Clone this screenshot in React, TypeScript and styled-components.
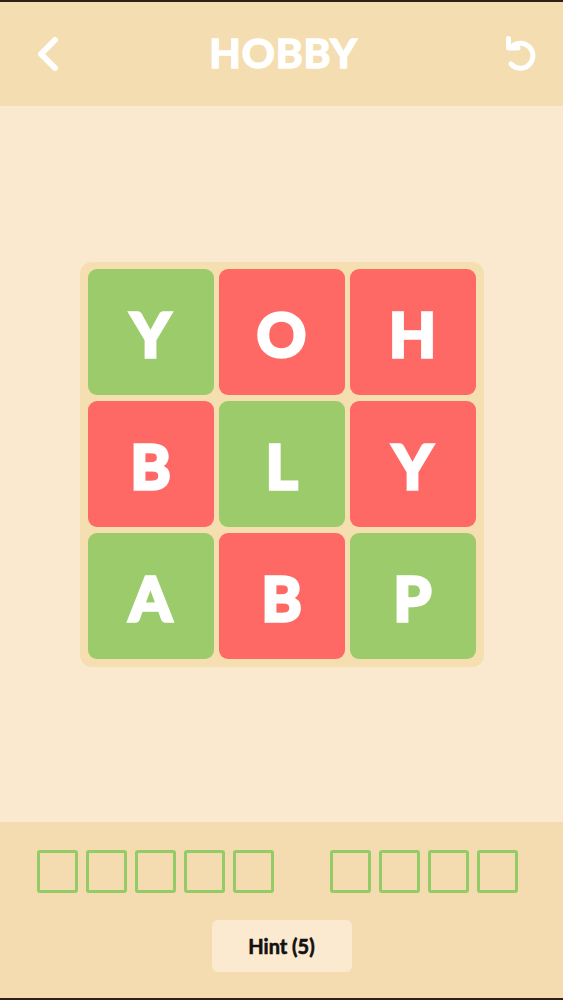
import React from "react";
import styled, { createGlobalStyle } from "styled-components";

const Global = createGlobalStyle`
  html, body { margin: 0; padding: 0; background: #2e2019; }
  #root { width: 563px; }
  * { box-sizing: border-box; }
`;

const Screen = styled.div`
  width: 563px;
  height: 1000px;
  display: flex;
  flex-direction: column;
  border-top: 2px solid #2e2019;
  border-bottom: 2px solid #2e2019;
  font-family: Lato, "Open Sans", sans-serif;
`;

const Header = styled.header`
  height: 104px;
  flex: none;
  background: #f4ddb0;
  display: flex;
  align-items: center;
  justify-content: space-between;
  padding: 0 26px 0 30px;
`;

const IconButton = styled.button`
  background: none;
  border: none;
  padding: 0;
  display: flex;
  align-items: center;
  justify-content: center;
  width: 34px;
  height: 40px;
  cursor: pointer;
`;

const Title = styled.h1`
  margin: 0 0 4px 0;
  color: #ffffff;
  font-family: Lato, sans-serif;
  font-weight: 700;
  font-size: 41px;
  letter-spacing: 0.8px;
  line-height: 1;
  -webkit-text-stroke: 1.6px #ffffff;
`;

const Main = styled.main`
  flex: 1;
  background: #fbe9cf;
  display: flex;
  align-items: center;
  justify-content: center;
`;

const Board = styled.div`
  background: #f5deb0;
  border-radius: 12px;
  padding: 7px 8px 8px 8px;
  display: grid;
  grid-template-columns: repeat(3, 126px);
  grid-auto-rows: 126px;
  gap: 6px 5px;
`;

const Tile = styled.div<{ $ok: boolean }>`
  background: ${(p) => (p.$ok ? "#9bcb6a" : "#fe6966")};
  border-radius: 9px;
  display: flex;
  align-items: center;
  justify-content: center;
  color: #ffffff;
  font-family: Lato, sans-serif;
  font-weight: 700;
  font-size: 61px;
  line-height: 1;
  padding-top: 4px;
  -webkit-text-stroke: 3.5px #ffffff;
`;

const Footer = styled.footer`
  height: 176px;
  flex: none;
  background: #f4dcb0;
  display: flex;
  flex-direction: column;
  align-items: center;
  padding-top: 28px;
  gap: 27px;
`;

const Answer = styled.div`
  display: flex;
  gap: 56px;
  margin-left: -8px;
`;

const Word = styled.div`
  display: flex;
  gap: 8px;
`;

const Slot = styled.div`
  width: 41px;
  height: 43px;
  border: 3px solid #93cb66;
  border-radius: 3px;
`;

const HintButton = styled.button`
  width: 140px;
  height: 52px;
  background: #fcead0;
  border: none;
  border-radius: 6px;
  font-family: Lato, sans-serif;
  font-weight: 700;
  font-size: 20px;
  color: #111111;
  -webkit-text-stroke: 0.6px #111111;
  cursor: pointer;
`;

const tiles: { l: string; ok: boolean }[] = [
  { l: "Y", ok: true },
  { l: "O", ok: false },
  { l: "H", ok: false },
  { l: "B", ok: false },
  { l: "L", ok: true },
  { l: "Y", ok: false },
  { l: "A", ok: true },
  { l: "B", ok: false },
  { l: "P", ok: true },
];

export default function App() {
  return (
    <>
      <Global />
      <Screen>
        <Header>
          <IconButton aria-label="back">
            <svg width="28" height="40" viewBox="0 0 28 40">
              <polyline
                points="22,6 8,20 22,34"
                fill="none"
                stroke="#fff"
                strokeWidth="6"
                strokeLinecap="round"
                strokeLinejoin="round"
              />
            </svg>
          </IconButton>
          <Title>HOBBY</Title>
          <IconButton aria-label="undo">
            <svg width="34" height="38" viewBox="0 0 34 38">
              <path
                d="M9 11.5 A12.5 12.5 0 1 1 8 29"
                fill="none"
                stroke="#fff"
                strokeWidth="5"
                strokeLinecap="round"
              />
              <path
                d="M5.5 3.5 V13 H15"
                fill="none"
                stroke="#fff"
                strokeWidth="5"
                strokeLinecap="round"
                strokeLinejoin="round"
              />
            </svg>
          </IconButton>
        </Header>
        <Main>
          <Board>
            {tiles.map((t, i) => (
              <Tile key={i} $ok={t.ok}>
                {t.l}
              </Tile>
            ))}
          </Board>
        </Main>
        <Footer>
          <Answer>
            <Word>
              {[0, 1, 2, 3, 4].map((i) => (
                <Slot key={i} />
              ))}
            </Word>
            <Word>
              {[0, 1, 2, 3].map((i) => (
                <Slot key={i} />
              ))}
            </Word>
          </Answer>
          <HintButton>Hint (5)</HintButton>
        </Footer>
      </Screen>
    </>
  );
}
